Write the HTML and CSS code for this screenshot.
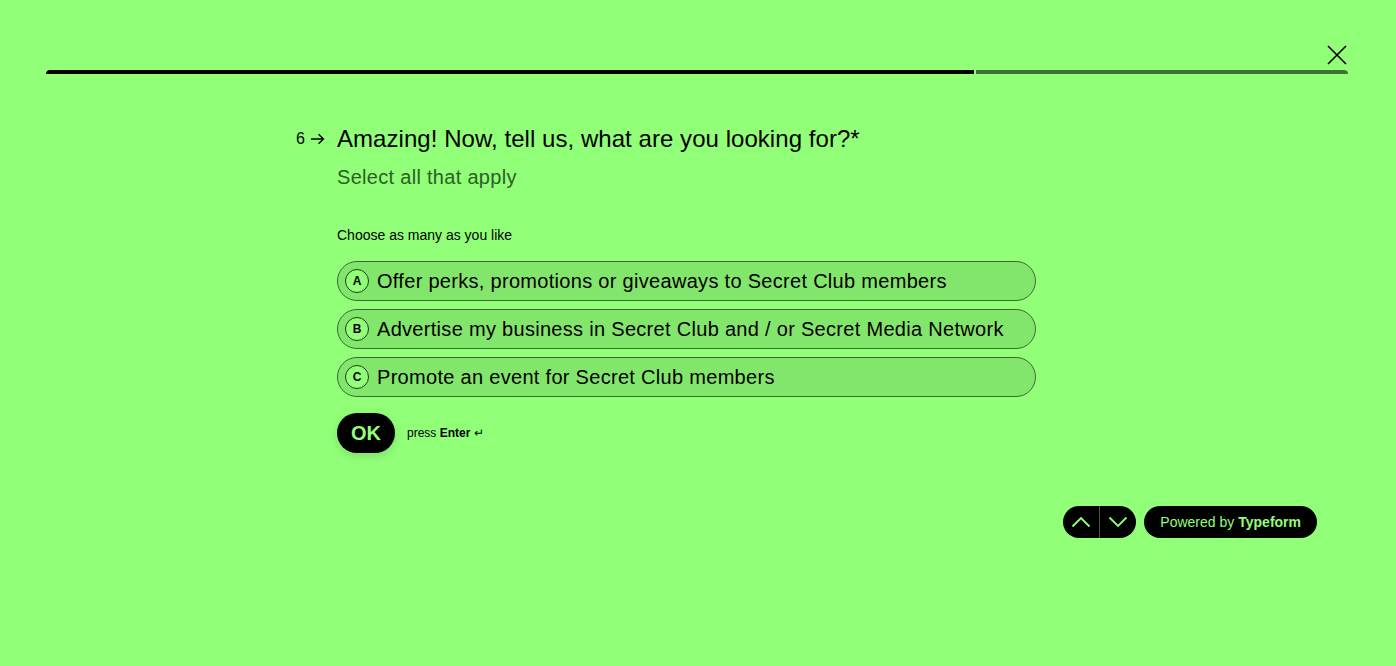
FILE: index.html
```html
<!DOCTYPE html>
<html>
<head>
<meta charset="utf-8">
<link rel="stylesheet" href="styles.css">
</head>
<body>
<div class="page">
  <header class="top">
    <div class="progress">
      <div class="progress-done"></div>
      <div class="progress-rest"></div>
    </div>
    <button class="close" aria-label="Close">
      <svg width="20" height="20" viewBox="0 0 20 20"><path d="M1 1L19 19M19 1L1 19" stroke="#000" stroke-width="1.6" fill="none"/></svg>
    </button>
  </header>

  <main class="question">
    <div class="qhead">
      <div class="qnum">6<svg width="15" height="12" viewBox="0 0 15 12"><path d="M1 6H13.5M8.5 1.2L13.5 6L8.5 10.8" stroke="#000" stroke-width="1.4" fill="none"/></svg></div>
      <div class="qbody">
        <h1 class="title">Amazing! Now, tell us, what are you looking for?*</h1>
        <p class="subtitle">Select all that apply</p>
        <p class="hint">Choose as many as you like</p>
        <ul class="options">
          <li class="option"><span class="key">A</span><span class="label">Offer perks, promotions or giveaways to Secret Club members</span></li>
          <li class="option"><span class="key">B</span><span class="label">Advertise my business in Secret Club and / or Secret Media Network</span></li>
          <li class="option"><span class="key">C</span><span class="label">Promote an event for Secret Club members</span></li>
        </ul>
        <div class="actions">
          <button class="ok">OK</button>
          <span class="press">press <b>Enter</b> ↵</span>
        </div>
      </div>
    </div>
  </main>

  <footer class="bottom">
    <div class="nav">
      <button class="navbtn" aria-label="Previous"><svg width="20" height="12" viewBox="0 0 20 12"><path d="M1.5 10.5L10 2L18.5 10.5" stroke="#91ff78" stroke-width="1.8" fill="none"/></svg></button>
      <span class="navsep"></span>
      <button class="navbtn" aria-label="Next"><svg width="20" height="12" viewBox="0 0 20 12"><path d="M1.5 1.5L10 10L18.5 1.5" stroke="#91ff78" stroke-width="1.8" fill="none"/></svg></button>
    </div>
    <div class="powered">Powered by <b>Typeform</b></div>
  </footer>
</div>
</body>
</html>
```

FILE: styles.css
```css
* { box-sizing: border-box; }
html, body { margin: 0; padding: 0; }
body {
  background: #91ff78;
  font-family: "Liberation Sans", Arial, sans-serif;
  color: #000;
  width: 1396px;
  height: 666px;
  overflow: hidden;
}
.page {
  display: flex;
  flex-direction: column;
  height: 666px;
}
.top {
  position: relative;
  height: 74px;
  padding: 70px 48px 0 46px;
}
.progress {
  display: flex;
  height: 4px;
  gap: 2px;
}
.progress-done {
  width: 928px;
  background: #000;
  border-radius: 4px 0 0 0;
}
.progress-rest {
  flex: 1;
  background: #3f7335;
  border-radius: 0 4px 0 0;
}
.close {
  position: absolute;
  top: 45px;
  left: 1327px;
  width: 20px;
  height: 20px;
  padding: 0;
  border: 0;
  background: none;
  display: flex;
}
.question {
  padding: 49px 0 0 296px;
}
.qhead {
  display: flex;
}
.qnum {
  width: 41px;
  font-size: 16px;
  padding-top: 7px;
  display: flex;
  align-items: flex-start;
  gap: 5px;
}
.qnum svg { margin-top: 3px; }
.title {
  margin: 0;
  font-size: 24px;
  font-weight: 400;
  line-height: 32px;
  letter-spacing: 0.05px;
}
.subtitle {
  margin: 8px 0 0;
  font-size: 20px;
  line-height: 28px;
  color: #2d5e25;
  letter-spacing: 0.3px;
}
.hint {
  margin: 34px 0 0;
  font-size: 14px;
  line-height: 20px;
}
.options {
  list-style: none;
  margin: 16px 0 0;
  padding: 0;
  display: flex;
  flex-direction: column;
  gap: 8px;
}
.option {
  width: 699px;
  height: 40px;
  border: 1px solid #3a6a31;
  border-radius: 20px;
  background: #83e66c;
  display: flex;
  align-items: center;
  padding-left: 7px;
  gap: 8px;
}
.key {
  width: 24px;
  height: 24px;
  border: 1px solid #1f3d1a;
  border-radius: 50%;
  background: #91ff78;
  font-size: 12px;
  font-weight: 700;
  display: flex;
  align-items: center;
  justify-content: center;
}
.label {
  font-size: 20px;
  letter-spacing: 0.3px;
}
.actions {
  margin-top: 16px;
  display: flex;
  align-items: center;
  gap: 12px;
}
.ok {
  width: 58px;
  height: 40px;
  border: 0;
  border-radius: 20px;
  background: #000;
  color: #91ff78;
  font-family: "Liberation Sans", Arial, sans-serif;
  font-weight: 700;
  font-size: 20px;
  box-shadow: 0 3px 10px rgba(0,0,0,0.12);
  padding: 0;
}
.press {
  font-size: 12px;
}
.press b { font-weight: 700; }
.bottom {
  display: flex;
  justify-content: flex-end;
  gap: 8px;
  padding: 53px 79px 0 0;
}
.nav {
  display: flex;
  height: 32px;
  background: #000;
  border-radius: 16px;
  overflow: hidden;
}
.navbtn {
  width: 36px;
  height: 32px;
  border: 0;
  background: none;
  padding: 0;
  display: flex;
  align-items: center;
  justify-content: center;
}
.navsep {
  width: 1px;
  background: #3f5a3a;
}
.powered {
  height: 32px;
  padding: 0 16px;
  border-radius: 16px;
  background: #000;
  color: #91ff78;
  font-size: 14px;
  display: flex;
  align-items: center;
  gap: 4px;
}
.powered b { font-weight: 700; }
```
